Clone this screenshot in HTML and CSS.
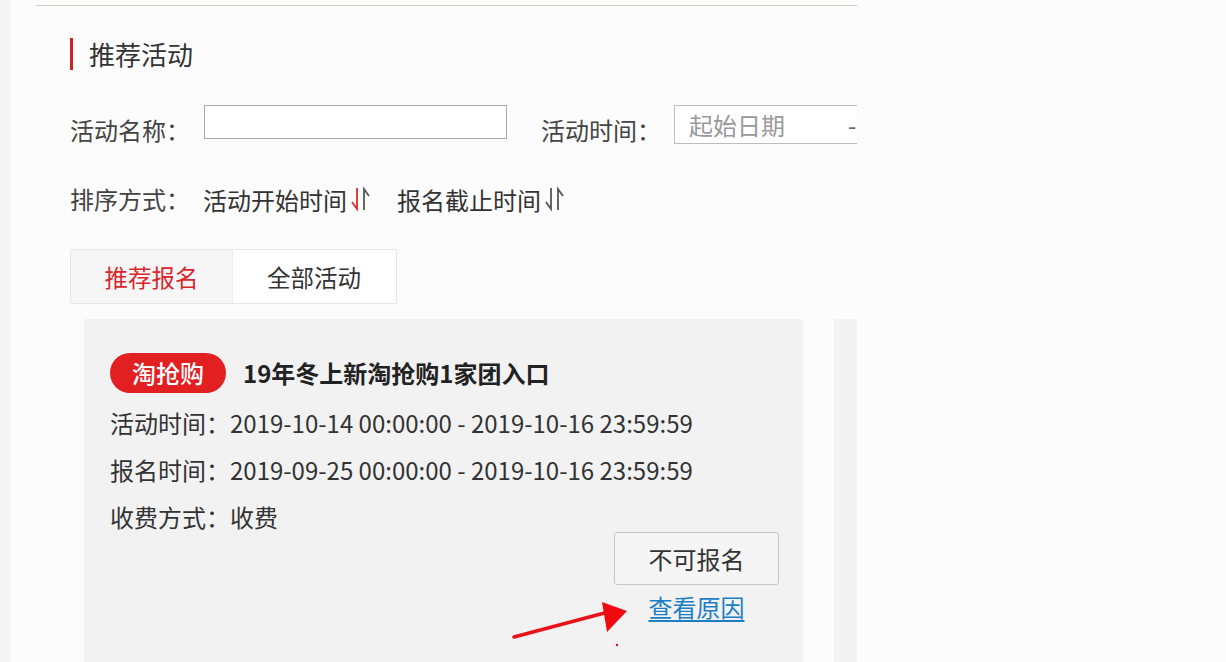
FILE: index.html
```html
<!DOCTYPE html>
<html lang="zh-CN">
<head>
<meta charset="utf-8">
<title>推荐活动</title>
<link rel="stylesheet" href="styles.css">
</head>
<body>
<div class="shell">
  <div class="gutter"></div>
  <div class="main">
    <div class="panel">
      <h2 class="section-title">推荐活动</h2>

      <div class="filter-row">
        <label class="label label-name">活动名称：</label>
        <div class="text-input"></div>
        <label class="label label-time">活动时间：</label>
        <div class="date-input"><span class="placeholder">起始日期</span><span class="dash">-</span></div>
      </div>

      <div class="sort-row">
        <span class="label">排序方式：</span>
        <span class="sort-item">活动开始时间<svg class="sort-icon" viewBox="0 0 20 26" width="20" height="26"><path d="M7 2 V23 L2 16" fill="none" stroke="#e02a2a" stroke-width="1.8"/><path d="M14 24 V3 L19 10" fill="none" stroke="#555" stroke-width="1.8"/></svg></span>
        <span class="sort-item">报名截止时间<svg class="sort-icon" viewBox="0 0 20 26" width="20" height="26"><path d="M7 2 V23 L2 16" fill="none" stroke="#555" stroke-width="1.8"/><path d="M14 24 V3 L19 10" fill="none" stroke="#555" stroke-width="1.8"/></svg></span>
      </div>

      <div class="tabs">
        <div class="tab tab-active">推荐报名</div>
        <div class="tab">全部活动</div>
      </div>

      <div class="cards">
        <div class="card">
          <div class="card-head">
            <span class="badge">淘抢购</span>
            <span class="card-title">19年冬上新淘抢购1家团入口</span>
          </div>
          <p class="info">活动时间：2019-10-14 00:00:00 - 2019-10-16 23:59:59</p>
          <p class="info">报名时间：2019-09-25 00:00:00 - 2019-10-16 23:59:59</p>
          <p class="info">收费方式：收费</p>
          <div class="actions">
            <button class="btn-disabled">不可报名</button>
            <a class="reason" href="#">查看原因</a>
          </div>
          <svg class="annot" viewBox="0 0 130 50" width="130" height="50">
            <path d="M2 46 L100 20" stroke="#e8141a" stroke-width="3.5" stroke-linecap="round"/>
            <polygon points="90,11 115,20 95,41" fill="#f0090f"/>
            <circle cx="105" cy="54" r="1.2" fill="#e01020"/>
          </svg>
        </div>
        <div class="card card-next"></div>
      </div>
    </div>
  </div>
</div>
</body>
</html>
```

FILE: styles.css
```css
* { box-sizing: border-box; }

html, body {
  margin: 0;
  padding: 0;
  background: #fcfcfd;
  font-family: "Noto Sans CJK SC", "Noto Sans", sans-serif;
  color: #333;
  height: 100%;
  overflow: hidden;
}

.shell {
  display: flex;
  height: 662px;
}

.gutter {
  width: 10px;
  flex-shrink: 0;
  background: #f5f5f6;
}

.main {
  width: 847px;
  flex-shrink: 0;
  overflow: hidden;
}

.panel {
  margin-left: 26px;
  margin-top: 5px;
  border-top: 1px solid #d8c8c8;
  padding: 32px 0 0 34px;
  height: 657px;
}

.section-title {
  margin: 0;
  font-weight: normal;
  font-size: 26px;
  line-height: 32px;
  color: #333;
  border-left: 3px solid #c8242a;
  padding-left: 16px;
  height: 32px;
}

.filter-row {
  display: flex;
  align-items: flex-start;
  margin-top: 35px;
  height: 38px;
}

.label {
  font-size: 24px;
  color: #444;
}

.filter-row .label {
  line-height: 52px;
  margin-top: -1px;
  flex-shrink: 0;
}

.label-name {
  width: 134px;
}

.text-input {
  flex-shrink: 0;
  width: 303px;
  height: 34px;
  border: 1px solid #a8a8a8;
  background: #fff;
}

.label-time {
  margin-left: 34px;
  width: 133px;
}

.date-input {
  flex-shrink: 0;
  width: 240px;
  height: 39px;
  border: 1px solid #bdbdbd;
  background: #fff;
  display: flex;
  align-items: center;
  padding-left: 14px;
  font-size: 24px;
}

.placeholder {
  color: #999;
  width: 159px;
}

.dash {
  color: #666;
}

.sort-row {
  display: flex;
  align-items: center;
  margin-top: 36px;
  height: 40px;
}

.sort-row .label {
  width: 133px;
  line-height: 40px;
  flex-shrink: 0;
}

.sort-item {
  display: inline-flex;
  align-items: center;
  font-size: 24px;
  color: #333;
  margin-right: 27px;
  white-space: nowrap;
}

.sort-icon {
  margin-left: 3px;
  display: block;
}

.tabs {
  display: flex;
  width: 327px;
  height: 55px;
  margin-top: 30px;
  border: 1px solid #e6e6e6;
  border-radius: 2px;
  background: #fff;
}

.tab {
  width: 162px;
  display: flex;
  align-items: center;
  justify-content: center;
  font-size: 23.5px;
  color: #333;
}

.tab-active {
  background: #f6f6f7;
  color: #d9262b;
  border-right: 1px solid #ececec;
}

.cards {
  display: flex;
  gap: 31px;
  margin-top: 15px;
  margin-left: 14px;
}

.card {
  position: relative;
  flex-shrink: 0;
  width: 719px;
  height: 360px;
  background: #f2f2f3;
  padding: 33px 0 0 26px;
}

.card-next {
  background: #f3f3f4;
}

.card-head {
  display: flex;
  align-items: center;
  height: 41px;
}

.badge {
  display: inline-flex;
  align-items: center;
  justify-content: center;
  width: 116px;
  height: 40px;
  border-radius: 20px;
  background: #e21f21;
  color: #fff;
  font-size: 24px;
  font-weight: 500;
}

.card-title {
  margin-left: 17px;
  font-size: 24px;
  font-weight: bold;
  color: #222;
}

.info {
  margin: 0;
  font-size: 24px;
  line-height: 47px;
  color: #333;
  white-space: nowrap;
}

.card-head + .info {
  margin-top: 6px;
}

.actions {
  display: flex;
  flex-direction: column;
  align-items: center;
  width: 165px;
  margin-left: 504px;
  margin-top: -8px;
}

.btn-disabled {
  width: 165px;
  height: 53px;
  border: 1px solid #c6c6c6;
  border-radius: 3px;
  background: #f5f5f5;
  font-family: inherit;
  font-size: 24px;
  color: #333;
  padding: 0;
}

.reason {
  margin-top: 8px;
  font-size: 24px;
  color: #1c7fc4;
  text-decoration: underline;
  text-underline-offset: 3px;
  line-height: 28px;
}

.annot {
  position: absolute;
  left: 428px;
  top: 272px;
  overflow: visible;
}
```
